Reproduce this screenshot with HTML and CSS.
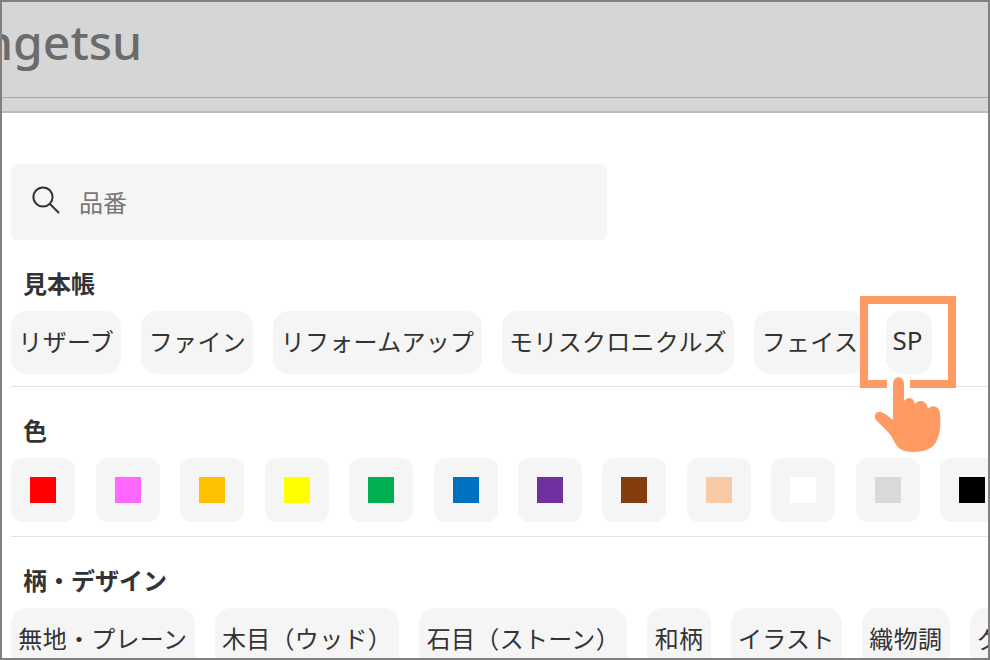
FILE: index.html
```html
<!DOCTYPE html>
<html lang="ja">
<head>
<meta charset="utf-8">
<title>Sangetsu</title>
<link rel="stylesheet" href="styles.css">
</head>
<body>
<div class="frame">
  <header class="topbar">
    <div class="logo">ngetsu</div>
  </header>
  <main class="panel">
    <div class="search">
      <svg class="search-icon" viewBox="0 0 30 30" width="30" height="30" aria-hidden="true">
        <circle cx="12" cy="12" r="9.6" fill="none" stroke="#333" stroke-width="2"/>
        <path d="M19 19 L28 28" fill="none" stroke="#333" stroke-width="2"/>
      </svg>
      <span class="placeholder">品番</span>
    </div>

    <section class="group">
      <h2 class="label">見本帳</h2>
      <div class="row">
        <span class="chip">リザーブ</span>
        <span class="chip">ファイン</span>
        <span class="chip">リフォームアップ</span>
        <span class="chip">モリスクロニクルズ</span>
        <span class="chip">フェイス</span>
        <span class="chip chip-sp">SP</span>
      </div>
    </section>

    <section class="group group-color">
      <h2 class="label">色</h2>
      <div class="row row-color">
        <span class="color"><i class="sw c1"></i></span>
        <span class="color"><i class="sw c2"></i></span>
        <span class="color"><i class="sw c3"></i></span>
        <span class="color"><i class="sw c4"></i></span>
        <span class="color"><i class="sw c5"></i></span>
        <span class="color"><i class="sw c6"></i></span>
        <span class="color"><i class="sw c7"></i></span>
        <span class="color"><i class="sw c8"></i></span>
        <span class="color"><i class="sw c9"></i></span>
        <span class="color"><i class="sw c10"></i></span>
        <span class="color"><i class="sw c11"></i></span>
        <span class="color"><i class="sw c12"></i></span>
      </div>
    </section>

    <section class="group group-last">
      <h2 class="label">柄・デザイン</h2>
      <div class="row">
        <span class="chip">無地・プレーン</span>
        <span class="chip">木目（ウッド）</span>
        <span class="chip">石目（ストーン）</span>
        <span class="chip">和柄</span>
        <span class="chip">イラスト</span>
        <span class="chip">織物調</span>
        <span class="chip">グラフィック</span>
      </div>
    </section>
  </main>

  <div class="highlight"></div>
  <svg class="hand" viewBox="0 0 90 90" width="90" height="90" aria-hidden="true">
    <rect x="27" y="8" width="23" height="11" fill="#fff"/>
    <path d="M33 14 C33 5 44 5 44 14 L44 31 C47 26 54 27 55 34 C58 29 67 30 68 39 C71 34 80 36 80 44 C81 55 80 64 77 70 C74 78 66 82 53 82 C44 82 38 79 35 73 C32 67 31 65 26 60 L16 50 C13 46 16 41 21 42 C25 43 29 47 33 50 Z" fill="#ff9a62"/>
  </svg>
</div>
</body>
</html>
```
FILE: styles.css
```css
* { box-sizing: border-box; }
html, body { margin: 0; padding: 0; background: #fff; }
body { font-family: "Noto Sans CJK JP", "Noto Sans", sans-serif; color: #333; }

.frame {
  position: relative;
  width: 990px;
  height: 660px;
  overflow: hidden;
  border: 2px solid #808080;
  background: #fff;
}

.topbar {
  height: 111px;
  background: #d6d6d6;
  border-bottom: 2px solid #bdbdbd;
  overflow: hidden;
}
.topbar::after {
  content: "";
  display: block;
  height: 1px;
  margin-top: 35px;
  background: #a8a8a8;
}
.logo {
  height: 60px;
  margin-left: -19px;
  font-family: "Noto Sans", sans-serif;
  font-size: 48px;
  font-weight: 500;
  line-height: 80px;
  color: #6b6b6b;
}

.panel { padding: 51px 0 0 9px; }

.search {
  display: flex;
  align-items: center;
  width: 596px;
  height: 76px;
  padding-left: 20px;
  background: #f5f5f5;
  border-radius: 6px;
}
.search-icon { flex: none; margin-top: -4px; }
.placeholder {
  margin: -2px 0 0 18px;
  font-size: 24px;
  color: #777;
}

.group { border-bottom: 1px solid #e4e4e4; padding-bottom: 12px; }
.group-color { padding-bottom: 14px; }
.group-last { border-bottom: 0; }

.label {
  margin: 32px 0 17px 12px;
  font-size: 24px;
  line-height: 22px;
  font-weight: 700;
  color: #333;
}

.row {
  display: flex;
  gap: 20px;
  white-space: nowrap;
}

.chip {
  flex: none;
  height: 63px;
  padding: 0 7.35px;
  background: #f5f5f5;
  border-radius: 16px;
  font-size: 24px;
  letter-spacing: 0.3px;
  line-height: 59px;
  color: #333;
}

.chip-sp {
  padding: 0 9px 0 7px;
  font-family: "Noto Sans", sans-serif;
  font-size: 26px;
  letter-spacing: 0;
}

.row-color { gap: 20.45px; margin-left: 0.4px; }
.color {
  flex: none;
  display: flex;
  align-items: center;
  justify-content: center;
  width: 64px;
  height: 64px;
  background: #f5f5f5;
  border-radius: 12px;
}
.sw { display: block; width: 26px; height: 26px; }
.c1 { background: #ff0000; }
.c2 { background: #ff66ff; }
.c3 { background: #ffc000; }
.c4 { background: #ffff00; }
.c5 { background: #00b050; }
.c6 { background: #0070c0; }
.c7 { background: #7030a0; }
.c8 { background: #843c0c; }
.c9 { background: #f8cba6; }
.c10 { background: #ffffff; }
.c11 { background: #d9d9d9; }
.c12 { background: #000000; }

.highlight {
  position: absolute;
  left: 858px;
  top: 294px;
  width: 96px;
  height: 92px;
  border: 8px solid #ff9a62;
}
.hand {
  position: absolute;
  left: 858px;
  top: 368px;
}
```
